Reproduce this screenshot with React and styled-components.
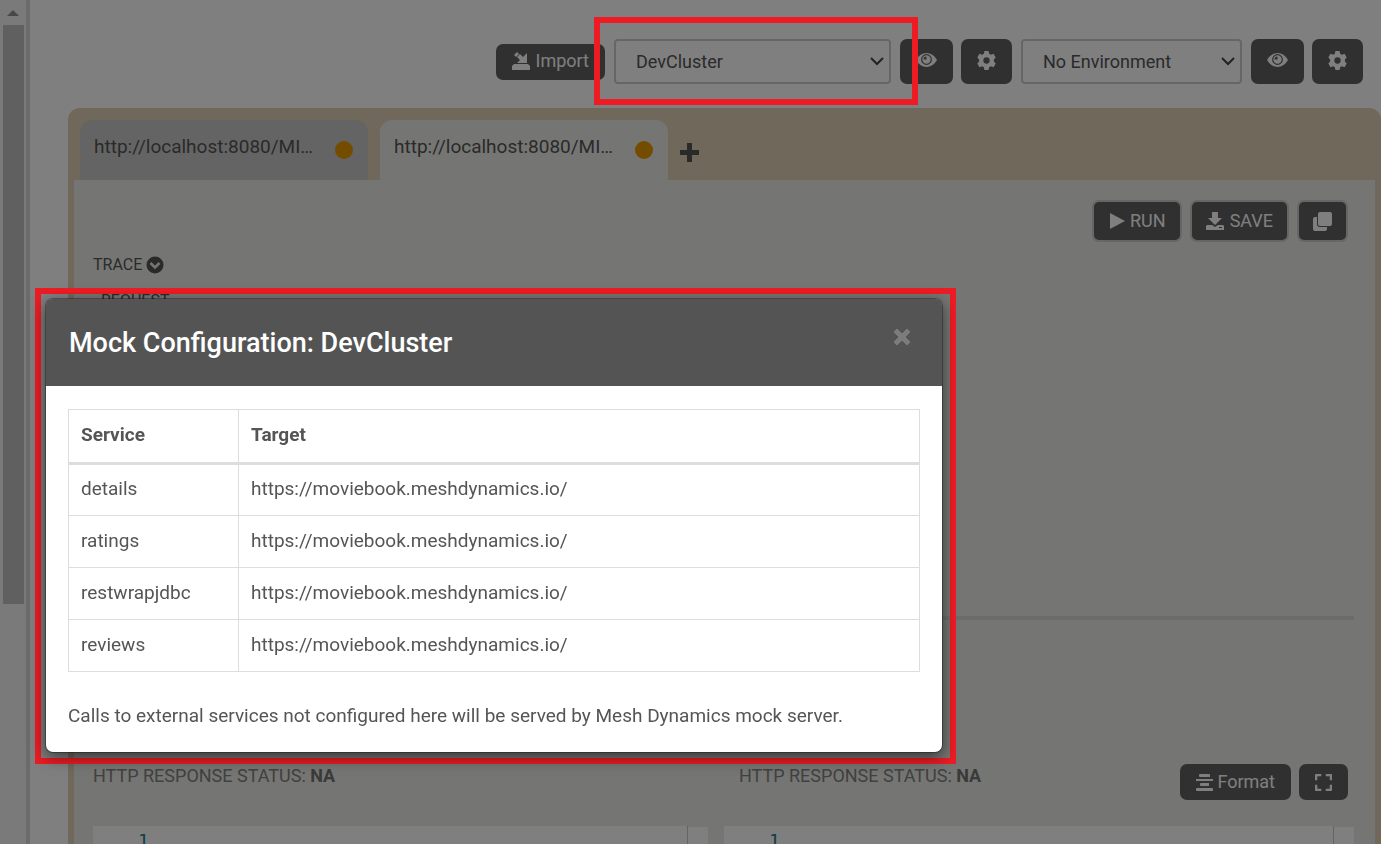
import React from "react";
import styled, { createGlobalStyle } from "styled-components";

const GlobalStyle = createGlobalStyle`
  *, *::before, *::after { box-sizing: border-box; }
  body {
    margin: 0;
    background: #fff;
    color: #555;
    font-family: Roboto, "Liberation Sans", sans-serif;
    font-size: 19px;
    line-height: 28px;
  }
  button, select, textarea { font: inherit; color: inherit; }
`;

const Page = styled.div`
  display: flex;
  height: 100vh;
  overflow: hidden;
  position: relative;
`;

const Sidebar = styled.aside`
  flex: none;
  width: 30px;
  border-right: 4px solid #d6d6d6;
  background: #f4f4f4;
  display: flex;
  flex-direction: column;
  align-items: center;
`;

const ScrollArrow = styled.svg`
  flex: none;
  display: block;
  width: 12px;
  height: 25px;
`;

const ScrollThumb = styled.div`
  width: 21px;
  height: 68.6%;
  background: #c1c1c1;
`;

const Main = styled.main`
  flex: 1;
  min-width: 0;
  display: flex;
  flex-direction: column;
  padding-left: 38px;
`;

const Toolbar = styled.header`
  flex: none;
  display: flex;
  align-items: center;
  justify-content: flex-end;
  gap: 9px;
  padding: 39px 18px 24px 0;
`;

const ButtonGroup = styled.div`
  display: flex;
  gap: 8px;
`;

const Button = styled.button`
  display: flex;
  align-items: center;
  justify-content: center;
  gap: ${(p) => p.$gap || 6}px;
  height: ${(p) => p.$height || 36}px;
  padding: 0 ${(p) => p.$pad || 16}px;
  border: ${(p) => (p.$outlined ? "2px solid #ccc" : "0")};
  border-radius: 7px;
  background: #606060;
  color: #fff;
  font-size: 18px;
  line-height: 24px;
  white-space: nowrap;
`;

const ToolbarButton = styled(Button)`
  padding-bottom: 2px;
`;

const Icon = styled.svg`
  flex: none;
  display: block;
  width: ${(p) => p.$size || 18}px;
  height: ${(p) => p.$size || 18}px;
  fill: currentColor;
`;

const SelectBox = styled.div`
  position: relative;
  flex: none;
  width: ${(p) => p.$width}px;
`;

const HighlightedSelectBox = styled(SelectBox)`
  &::after {
    content: "";
    position: absolute;
    inset: -22px -27px -21px -20px;
    border: 6px solid #ed1c24;
    z-index: 30;
    pointer-events: none;
  }
`;

const Select = styled.select`
  appearance: none;
  display: block;
  width: 100%;
  height: 45px;
  padding: 0 36px 0 20px;
  border: 2px solid #ccc;
  border-radius: 4px;
  background: #fff;
  font-size: 18px;
`;

const Chevron = styled.svg`
  position: absolute;
  right: 6px;
  top: 17px;
  width: 16px;
  height: 11px;
  fill: none;
  stroke: #444;
  stroke-width: 2;
  pointer-events: none;
`;

const Workspace = styled.section`
  flex: 1;
  min-height: 0;
  display: flex;
  flex-direction: column;
  padding: 12px 6px 0;
  border-radius: 12px 12px 0 0;
  background: #ded0b6;
`;

const TabBar = styled.nav`
  flex: none;
  display: flex;
  gap: 12px;
  padding-left: 6px;
`;

const Tab = styled.button`
  display: flex;
  justify-content: space-between;
  width: 288px;
  height: 60px;
  padding: 13px 15px 0 14px;
  border: 0;
  border-radius: 12px 12px 0 0;
  background: ${(p) => (p.$active ? "#ebebe7" : "#c8c8c8")};
`;

const UnsavedDot = styled.span`
  width: 18px;
  height: 18px;
  margin-top: 8px;
  border-radius: 50%;
  background: #e89800;
`;

const AddTab = styled.button`
  height: 60px;
  padding: 4px 0 0;
  border: 0;
  background: none;
  color: #555;
`;

const Content = styled.div`
  flex: 1;
  min-height: 0;
  display: flex;
  flex-direction: column;
  padding: 20px 21px 0 19px;
  background: #ebebe7;
`;

const Actions = styled.div`
  display: flex;
  justify-content: flex-end;
  gap: 8px;
  padding-right: 6px;
`;

const TraceToggle = styled.button`
  display: flex;
  align-items: center;
  align-self: flex-start;
  gap: 4px;
  margin-top: 11px;
  padding: 0;
  border: 0;
  background: none;
  font-size: 16px;
  line-height: 24px;
`;

const RequestArea = styled.div`
  flex: none;
  height: 343px;
  padding: 12px 8px;
  border-bottom: 4px solid #d8d8d8;
  font-size: 16px;
  line-height: 24px;
`;

const Responses = styled.div`
  display: grid;
  grid-template-columns: 615fr 630fr;
  gap: 16px;
  margin-top: 144px;
`;

const ResponseHead = styled.div`
  display: flex;
  align-items: flex-start;
  justify-content: space-between;
  height: 62px;
  padding: 0 6px 0 ${(p) => p.$indent || 0}px;
`;

const Status = styled.span`
  color: #828282;
  font-size: 18px;
  line-height: 24px;
  b { color: #747474; }
`;

const Editor = styled.div`
  display: flex;
  height: 200px;
`;

const LineNumber = styled.span`
  flex: none;
  width: 57px;
  background: #fff;
  padding: 1px 0 0 45px;
  color: #237893;
  font-family: "DejaVu Sans Mono", monospace;
  font-size: 18px;
`;

const Code = styled.textarea`
  flex: 1;
  min-width: 0;
  border: 0;
  border-right: 1px solid #c8c8c8;
  background: #fff;
  resize: none;
`;

const EditorRuler = styled.div`
  flex: none;
  width: 20px;
  margin-top: 1px;
  background: #fff;
`;

const Backdrop = styled.div`
  position: fixed;
  inset: 0;
  z-index: 10;
  background: rgba(0, 0, 0, 0.5);
`;

const DialogLayer = styled.div`
  position: absolute;
  left: 35px;
  top: 288px;
  z-index: 20;
  padding: 4px 7px 5px 4px;
  border: 6px solid #ed1c24;
`;

const Dialog = styled.section`
  width: 65vw;
  min-width: 860px;
  border: 1px solid rgba(0, 0, 0, 0.3);
  border-radius: 8px;
  background: #fff;
  background-clip: padding-box;
  box-shadow: 0 5px 15px rgba(0, 0, 0, 0.5);
`;

const DialogHeader = styled.header`
  display: flex;
  justify-content: space-between;
  align-items: flex-start;
  height: 87px;
  padding: 26px 31px 0 23px;
  border-radius: 6px 6px 0 0;
  background: #545454;
`;

const Title = styled.h2`
  margin: 0;
  color: #fff;
  font-size: 27px;
  line-height: 36px;
  font-weight: 500;
`;

const CloseButton = styled.button`
  padding: 3px 0;
  border: 0;
  background: none;
  color: #7c7c7c;
`;

const DialogBody = styled.div`
  padding: 23px 22px 22px;
`;

const Table = styled.table`
  width: 100%;
  table-layout: fixed;
  border-collapse: collapse;
  th, td {
    height: 52px;
    padding: 0 12px 2px;
    border: 1px solid #ddd;
    text-align: left;
  }
  th {
    height: 54px;
    border-bottom-width: 3px;
    font-weight: 700;
  }
  th:first-child { width: 170px; }
`;

const Note = styled.p`
  margin: 30px 0 0;
`;

const svgs = {
  plus: <path d="M7 0h5v7h7v5h-7v7H7v-7H0V7h7z" />,
  import: (
    <>
      <path d="M2 12h14l2 2v4H0v-4z" />
      <path d="M15 1v10H5l3-3-3-3L8 2l3 3zM5 0l2 2-3 3-2-2z" />
    </>
  ),
  save: (
    <path fillRule="evenodd" d="M6 0h6v6h4L9 13 2 6h4zM1 13h5l3 2 3-2h5l1 1v4H0v-4zM13 15v1h3v-1z" />
  ),
  play: <path d="M2 1l15 8-15 8z" />,
  clone: (
    <>
      <path d="M7 0h10q2 0 2 2v10q0 2-2 2H7q-2 0-2-2V2q0-2 2-2z" />
      <path d="M2 5h2v7q0 3 3 3h7v2q0 2-2 2H2q-2 0-2-2V7q0-2 2-2z" />
    </>
  ),
  format: <path d="M4 0h9q1 0 1 1v2H4q-1 0-1-1V1q0-1 1-1zM0 5h17v2H0zM5 9h8v3H5q-1 0-1-1v-1q0-1 1-1zM1 14h15q1 0 1 1v2H1q-1 0-1-1v-1q0-1 1-1z" />,
  expand: <path d="M1 0h5v2H2v4H0V1q0-1 1-1zM11 0h5q1 0 1 1v5h-2V2h-4zM0 11h2v4h4v2H1q-1 0-1-1zM15 11h2v5q0 1-1 1h-5v-2h4z" stroke="currentColor" strokeWidth="0.6" />,
  close: <path d="M4 1l5 5 5-5 3 3-5 5 5 5-3 3-5-5-5 5-3-3 5-5-5-5z" stroke="currentColor" strokeLinejoin="round" />,
};

const Glyph = ({ name, size = 18, box = 18 }) => (
  <Icon $size={size} viewBox={`0 0 ${box} ${box}`} aria-hidden="true">
    {svgs[name]}
  </Icon>
);

const Eye = () => (
  <Icon $size={21} viewBox="0 0 21 21" aria-hidden="true">
    <path d="M0 10Q4 3 10.500 3T21 10Q17 17 10.500 17T0 10z" />
    <circle cx="10.500" cy="9.500" r="4.800" fill="none" stroke="#606060" strokeWidth="1.200" />
    <path d="M10.500 6.500v3h-3q0-3 3-3z" fill="#606060" />
  </Icon>
);

const Gear = () => (
  <Icon $size={19} viewBox="0 0 18 18" aria-hidden="true">
    <path
      fillRule="evenodd"
      d="M7 0h4l.5 2.500 1.700 1L15.700 2.700l2 3.500L16 8v2l1.700 1.800-2 3.500-2.500-.8-1.700 1L11 18H7l-.5-2.500-1.700-1-2.500.8-2-3.500L2 10V8L.3 6.200l2-3.500 2.500.8 1.700-1zM9 6a3 3 0 1 0 0 6 3 3 0 0 0 0-6z"
    />
  </Icon>
);

const ViewAndConfigure = ({ subject }) => (
  <ButtonGroup>
    <ToolbarButton $height={45} aria-label={`View ${subject}`}><Eye /></ToolbarButton>
    <ToolbarButton $height={45} aria-label={`Configure ${subject}`}><Gear /></ToolbarButton>
  </ButtonGroup>
);

const Down = () => (
  <Chevron viewBox="0 0 16 11"><path d="M2 2l6 6 6-6" /></Chevron>
);

const services = ["details", "ratings", "restwrapjdbc", "reviews"];

const EditorPane = ({ label }) => (
  <Editor>
    <LineNumber>1</LineNumber>
    <Code aria-label={label} />
    <EditorRuler />
  </Editor>
);

export default function App() {
  return (
    <>
      <GlobalStyle />
      <Page>
        <Sidebar>
          <ScrollArrow viewBox="0 0 12 25"><path d="M0 16l6-6 6 6z" fill="#909090" /></ScrollArrow>
          <ScrollThumb />
        </Sidebar>
        <Main>
          <Toolbar>
            <ToolbarButton><Glyph name="import" />Import</ToolbarButton>
            <HighlightedSelectBox $width={277}>
              <Select aria-label="Mock configuration" defaultValue="DevCluster">
                <option>DevCluster</option>
              </Select>
              <Down />
            </HighlightedSelectBox>
            <ViewAndConfigure subject="mock configuration" />
            <SelectBox $width={221}>
              <Select aria-label="Environment" defaultValue="No Environment">
                <option>No Environment</option>
              </Select>
              <Down />
            </SelectBox>
            <ViewAndConfigure subject="environment" />
          </Toolbar>
          <Workspace>
            <TabBar>
              <Tab>http://localhost:8080/MI…<UnsavedDot /></Tab>
              <Tab $active>http://localhost:8080/MI…<UnsavedDot /></Tab>
              <AddTab aria-label="Add tab"><Glyph name="plus" size={19} box={19} /></AddTab>
            </TabBar>
            <Content>
              <Actions>
                <Button $height={42} $outlined $pad={14} $gap={4}><Glyph name="play" />RUN</Button>
                <Button $height={42} $outlined $pad={14}><Glyph name="save" />SAVE</Button>
                <Button $height={42} $outlined $pad={14} aria-label="Duplicate"><Glyph name="clone" size={19} box={19} /></Button>
              </Actions>
              <TraceToggle>
                TRACE
                <Icon $size={18} viewBox="0 0 18 18" aria-hidden="true">
                  <circle cx="9" cy="9" r="8.500" />
                  <path d="M4.500 7l4.500 4.500L13.500 7" fill="none" stroke="#ebebe7" strokeWidth="2.600" />
                </Icon>
              </TraceToggle>
              <RequestArea>REQUEST</RequestArea>
              <Responses>
                <div>
                  <ResponseHead><Status>HTTP RESPONSE STATUS: <b>NA</b></Status></ResponseHead>
                  <EditorPane label="Left response body" />
                </div>
                <div>
                  <ResponseHead $indent={15}>
                    <Status>HTTP RESPONSE STATUS: <b>NA</b></Status>
                    <ButtonGroup>
                      <Button $gap={4}><Glyph name="format" size={17} box={17} />Format</Button>
                      <Button aria-label="Full screen"><Glyph name="expand" size={17} box={17} /></Button>
                    </ButtonGroup>
                  </ResponseHead>
                  <EditorPane label="Right response body" />
                </div>
              </Responses>
            </Content>
          </Workspace>
        </Main>
        <Backdrop />
        <DialogLayer>
          <Dialog role="dialog" aria-labelledby="mock-title">
            <DialogHeader>
              <Title id="mock-title">Mock Configuration: DevCluster</Title>
              <CloseButton aria-label="Close"><Glyph name="close" /></CloseButton>
            </DialogHeader>
            <DialogBody>
              <Table>
                <thead>
                  <tr><th scope="col">Service</th><th scope="col">Target</th></tr>
                </thead>
                <tbody>
                  {services.map((name) => (
                    <tr key={name}><td>{name}</td><td>https://moviebook.meshdynamics.io/</td></tr>
                  ))}
                </tbody>
              </Table>
              <Note>Calls to external services not configured here will be served by Mesh Dynamics mock server.</Note>
            </DialogBody>
          </Dialog>
        </DialogLayer>
      </Page>
    </>
  );
}
